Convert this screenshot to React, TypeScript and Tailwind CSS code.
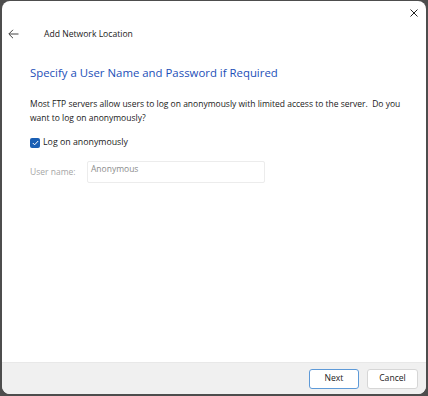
import React from 'react';

const font = { fontFamily: '"Segoe UI", "Open Sans", "Noto Sans", sans-serif' };

const BackArrow = () => (
  <svg width="11" height="10" viewBox="0 0 11 10" fill="none" stroke="#444" strokeWidth="1">
    <path d="M10.5 5H1M5 0.8L0.8 5L5 9.2" />
  </svg>
);

const CloseIcon = () => (
  <svg width="8" height="8" viewBox="0 0 8 8" fill="none" stroke="#222" strokeWidth="1">
    <path d="M0.5 0.5L7.5 7.5M7.5 0.5L0.5 7.5" />
  </svg>
);

const App: React.FC = () => {
  return (
    <div className="w-[428px] h-[396px] bg-[#4d4d4d] pt-px pl-[2px] pr-[2px] pb-[2px]" style={font}>
      <div className="h-full bg-white rounded-lg flex flex-col overflow-hidden">
        {/* Title bar */}
        <div className="h-[24px] flex justify-end items-center pr-[2px]">
          <button className="w-[20px] h-[20px] flex items-center justify-center">
            <CloseIcon />
          </button>
        </div>

        {/* Header */}
        <div className="flex items-center h-[18px] pl-[6px]">
          <BackArrow />
          <span className="ml-[25px] text-[8.6px] text-[#1a1a1a]">Add Network Location</span>
        </div>

        {/* Body */}
        <div className="flex-1 pl-[28px] pr-[8px] pt-[21px]">
          <h1 className="text-[11.4px] text-[#1c4fb8] leading-[18px]">Specify a User Name and Password if Required</h1>

          <p className="mt-[15px] text-[8.5px] leading-[14px] text-[#1a1a1a] whitespace-nowrap">
            Most FTP servers allow users to log on anonymously with limited access to the server.&nbsp; Do you
            <br />
            want to log on anonymously?
          </p>

          <label className="mt-[11px] flex items-center gap-[3px] text-[8.8px] text-[#1a1a1a]">
            <span className="w-[10px] h-[10px] rounded-[2px] bg-[#1a5fb4] flex items-center justify-center">
              <svg width="7" height="6" viewBox="0 0 7 6" fill="none" stroke="white" strokeWidth="1">
                <path d="M0.8 3L2.6 4.8L6.2 1" />
              </svg>
            </span>
            Log on anonymously
          </label>

          <div className="mt-[12px] flex items-center">
            <span className="w-[57px] text-[8.5px] text-[#a6a6a6]">User name:</span>
            <div className="w-[178px] h-[22px] border border-[#ececec] rounded-[2px] pl-[3px] pt-[1px] text-[8.5px] text-[#8c8c8c]">
              Anonymous
            </div>
          </div>
        </div>

        {/* Footer */}
        <div className="h-[32px] bg-[#f0f0f0] flex items-center justify-end gap-[8px] pr-[8px] border-t border-[#e8e8e8]">
          <button className="w-[50px] h-[20px] bg-white border border-[#5e9ad8] rounded-[3px] text-[8.6px] text-[#1a1a1a]">
            Next
          </button>
          <button className="w-[51px] h-[20px] bg-white border border-[#d6d6d6] rounded-[3px] text-[8.6px] text-[#1a1a1a]">
            Cancel
          </button>
        </div>
      </div>
    </div>
  );
};

export default App;
